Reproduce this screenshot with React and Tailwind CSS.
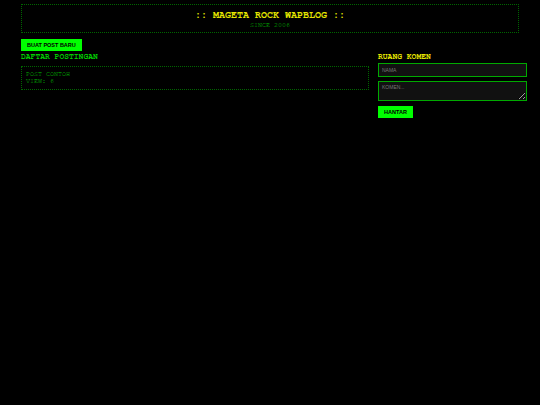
const monoFont = "font-['Nimbus_Mono_PS','Nimbus_Mono_L','FreeMono','Courier_New','Liberation_Mono',monospace]";

export default function App() {
  return (
    <div className={`min-h-[405px] bg-black pl-[21px] pr-[13px] pt-[4px] text-[8px] leading-[10px] ${monoFont}`}>
      <header className="w-[498px] h-[29px] border border-dotted border-[#006600] flex flex-col items-center justify-center">
        <h1 className="text-[10px] leading-[12px] font-bold text-[#e6e600]">:: MAGETA ROCK WAPBLOG ::</h1>
        <p className="text-[6.7px] leading-[8px] text-[#00c000]">SINCE 2006</p>
      </header>

      <div className="mt-[6px] flex gap-[9px]">
        <main className="w-[348px]">
          <button className="block h-[12px] px-[6px] bg-[#00ff00] text-black text-[5.5px] font-bold font-['Liberation_Sans',sans-serif]">
            BUAT POST BARU
          </button>
          <h2 className="mt-[1px] text-[8px] leading-[10px] font-bold text-[#00cc00]">DAFTAR POSTINGAN</h2>
          <div className="mt-[4px] h-[24px] border border-dotted border-[#006600] px-[4px] pt-[4px] text-[6.7px] leading-[7px] text-[#00c000]">
            <div>POST CONTOH</div>
            <div>VIEW: 6</div>
          </div>
        </main>

        <aside className="w-[149px] pt-[13px]">
          <h2 className="text-[8px] leading-[10px] font-bold text-[#e6e600]">RUANG KOMEN</h2>
          <input
            placeholder="NAMA"
            className="mt-[1px] block w-full h-[14px] bg-[#111111] border border-[#00aa00] px-[3px] text-[5px] text-[#888] placeholder-[#777] outline-none font-['Liberation_Sans',sans-serif]"
          />
          <textarea
            placeholder="KOMEN..."
            className="mt-[4px] block w-full h-[20px] bg-[#111111] border border-[#00aa00] px-[3px] pt-[2px] text-[5px] leading-[6px] text-[#888] placeholder-[#777] outline-none font-['Liberation_Sans',sans-serif]"
          />
          <button className="block mt-[5px] h-[12px] w-[35px] bg-[#00ff00] text-black text-[5.5px] font-bold font-['Liberation_Sans',sans-serif]">
            HANTAR
          </button>
        </aside>
      </div>
    </div>
  );
}
